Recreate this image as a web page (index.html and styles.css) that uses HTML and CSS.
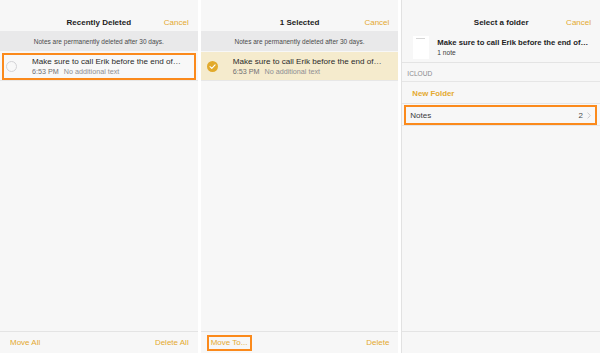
FILE: index.html
```html
<!DOCTYPE html>
<html lang="en">
<head>
<meta charset="utf-8">
<title>Notes – Recently Deleted</title>
<link rel="stylesheet" href="styles.css">
</head>
<body>
<div class="screens">
  <section class="panel">
    <header class="nav">
      <span class="nav-title">Recently Deleted</span>
      <span class="nav-action">Cancel</span>
    </header>
    <div class="banner">Notes are permanently deleted after 30 days.</div>
    <div class="note-row marked">
      <span class="radio"></span>
      <div class="note-text">
        <div class="note-title">Make sure to call Erik before the end of…</div>
        <div class="note-meta"><span>6:53 PM</span><span>No additional text</span></div>
      </div>
    </div>
    <div class="fill"></div>
    <footer class="toolbar">
      <span class="tool">Move All</span>
      <span class="tool">Delete All</span>
    </footer>
  </section>

  <section class="panel">
    <header class="nav">
      <span class="nav-title">1 Selected</span>
      <span class="nav-action">Cancel</span>
    </header>
    <div class="banner">Notes are permanently deleted after 30 days.</div>
    <div class="note-row selected">
      <svg class="check" width="11" height="11" viewBox="0 0 11 11" aria-hidden="true">
        <circle cx="5.5" cy="5.5" r="5.5" fill="#e2aa2c"/>
        <path d="M3 5.7 L4.8 7.4 L8.1 3.9" fill="none" stroke="#fff" stroke-width="1.1" stroke-linecap="round" stroke-linejoin="round"/>
      </svg>
      <div class="note-text">
        <div class="note-title">Make sure to call Erik before the end of…</div>
        <div class="note-meta"><span>6:53 PM</span><span>No additional text</span></div>
      </div>
    </div>
    <div class="fill"></div>
    <footer class="toolbar">
      <span class="tool boxed">Move To...</span>
      <span class="tool">Delete</span>
    </footer>
  </section>

  <section class="panel panel-folders">
    <header class="nav">
      <span class="nav-title">Select a folder</span>
      <span class="nav-action">Cancel</span>
    </header>
    <div class="move-summary">
      <span class="thumb"></span>
      <div class="summary-text">
        <div class="summary-title">Make sure to call Erik before the end of…</div>
        <div class="summary-count">1 note</div>
      </div>
    </div>
    <div class="section-head">ICLOUD</div>
    <div class="folder-row new-folder">New Folder</div>
    <div class="folder-row notes-folder marked">
      <span class="folder-name">Notes</span>
      <span class="folder-count">2</span>
      <svg class="chevron" width="4" height="7" viewBox="0 0 4 7" aria-hidden="true">
        <path d="M0.6 0.6 L3.3 3.5 L0.6 6.4" fill="none" stroke="#c4c4c8" stroke-width="0.9"/>
      </svg>
    </div>
    <div class="fill"></div>
    <footer class="toolbar"></footer>
  </section>
</div>
</body>
</html>
```

FILE: styles.css
```css
* {
  box-sizing: border-box;
}

html, body {
  margin: 0;
  padding: 0;
  background: #ffffff;
}

body {
  font-family: "Liberation Sans", Helvetica, Arial, sans-serif;
  color: #1e1e1e;
}

.screens {
  display: flex;
  gap: 3px;
  width: 600px;
  height: 353px;
  background: #ffffff;
}

.panel {
  flex: 1;
  display: flex;
  flex-direction: column;
  background: #f7f7f7;
  min-width: 0;
}

.panel-folders {
  border-left: 1px solid #e2e2e2;
}

/* navigation bar */
.nav {
  height: 31px;
  padding: 15px 9px 0 9px;
  display: grid;
  grid-template-columns: 1fr auto 1fr;
  align-items: center;
  line-height: 12px;
}

.nav-title {
  grid-column: 2;
  font-size: 8px;
  font-weight: bold;
  color: #1c1c1c;
}

.nav-action {
  grid-column: 3;
  justify-self: end;
  font-size: 8px;
  color: #e4a92f;
}

/* banner */
.banner {
  height: 20px;
  margin-bottom: 1px;
  background: #e9e9ea;
  font-size: 6.5px;
  color: #4a4a4a;
  display: flex;
  align-items: center;
  justify-content: center;
  padding-top: 1px;
}

/* note row */
.note-row {
  position: relative;
  height: 29px;
  display: flex;
  align-items: center;
  padding-left: 6px;
  border-bottom: 1px solid #e7e7e7;
  background: #f8f8f8;
}

.note-row.selected {
  background: #f5ebcd;
}

.radio {
  width: 11px;
  height: 11px;
  border-radius: 50%;
  border: 1px solid #d3d3d6;
  flex: none;
}

.check {
  flex: none;
  display: block;
}

.note-text {
  margin-left: 15px;
  padding-top: 1px;
}

.note-title {
  font-size: 8.1px;
  line-height: 10px;
  color: #2a2a2a;
  white-space: nowrap;
}

.note-meta {
  font-size: 7.2px;
  line-height: 9px;
  color: #8e8e93;
  display: flex;
  gap: 5px;
}

.note-meta span:first-child {
  color: #6f6f73;
}

.marked::after {
  content: "";
  position: absolute;
  top: 1px;
  bottom: 0;
  left: 2px;
  right: 2px;
  border: 2px solid #fb8a1c;
  pointer-events: none;
}

.fill {
  flex: 1;
}

/* toolbar */
.toolbar {
  height: 22px;
  border-top: 1px solid #e4e4e4;
  display: flex;
  justify-content: space-between;
  align-items: center;
  padding: 1px 9px 0 10px;
}

.tool {
  font-size: 8px;
  line-height: 12px;
  color: #e4a92f;
}

.tool.boxed {
  padding: 0 3px 0 2px;
  margin-left: -2px;
  outline: 2px solid #fb8a1c;
}

/* folder picker */
.move-summary {
  height: 32px;
  display: flex;
  align-items: center;
  padding-left: 11px;
  border-bottom: 1px solid #e4e4e4;
}

.thumb {
  position: relative;
  width: 16px;
  height: 23px;
  background: #ffffff;
  flex: none;
  margin-top: 2px;
}

.thumb::before {
  content: "";
  position: absolute;
  top: 2px;
  left: 3px;
  width: 9px;
  height: 1px;
  background: #d6d6d6;
}

.summary-text {
  margin-left: 8px;
  padding-top: 2px;
  min-width: 0;
}

.summary-title {
  font-size: 7.7px;
  font-weight: bold;
  line-height: 11px;
  color: #1e1e1e;
  white-space: nowrap;
}

.summary-count {
  font-size: 6.6px;
  line-height: 10px;
  color: #3a3a3a;
}

.section-head {
  height: 19px;
  display: flex;
  align-items: center;
  padding: 3px 0 0 5px;
  font-size: 6.6px;
  color: #8a8a8e;
  border-bottom: 1px solid #e6e6e6;
}

.folder-row {
  height: 22px;
  display: flex;
  align-items: center;
  border-bottom: 1px solid #e6e6e6;
}

.new-folder {
  padding-left: 10px;
  padding-top: 1px;
  font-size: 7.8px;
  font-weight: bold;
  color: #e4a92f;
}

.notes-folder {
  position: relative;
  padding: 1px 9px 0 8px;
  font-size: 8px;
  color: #3a3a3a;
}

.notes-folder.marked::after {
  top: 1px;
  bottom: 0;
  left: 2px;
  right: 3px;
}

.folder-name {
  flex: 1;
}

.folder-count {
  color: #4a4a4a;
  margin-right: 4px;
}

.chevron {
  display: block;
}
```
